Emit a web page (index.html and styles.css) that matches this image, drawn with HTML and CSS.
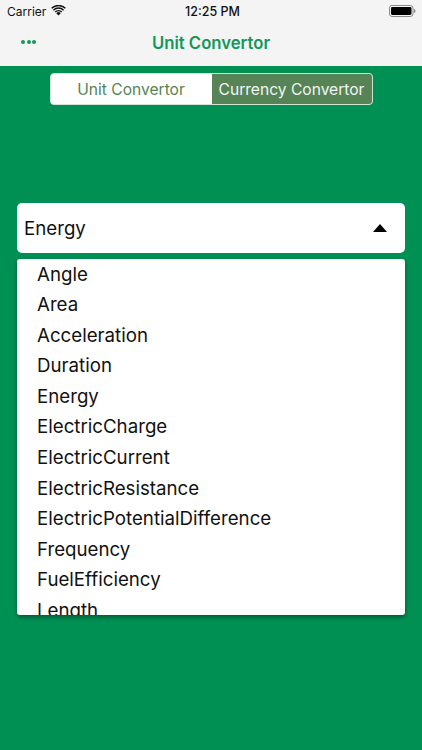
FILE: index.html
```html
<!DOCTYPE html>
<html lang="en">
<head>
<meta charset="utf-8">
<title>Unit Convertor</title>
<link rel="stylesheet" href="styles.css">
</head>
<body>
<div class="app">
  <header class="top">
    <div class="status">
      <div class="status-left">
        <span>Carrier</span>
        <svg class="wifi" viewBox="0 0 16 12" width="15" height="11"><path d="M8 11.5 5.6 8.9a3.4 3.4 0 0 1 4.8 0z" fill="#111"/><path d="M3.9 7.2a5.8 5.8 0 0 1 8.2 0l-1 1.1a4.4 4.4 0 0 0-6.2 0z" fill="#111"/><path d="M1.9 5.1a8.6 8.6 0 0 1 12.2 0l-1.1 1.1a7 7 0 0 0-10 0z" fill="#111"/><path d="M0 3.1a11.3 11.3 0 0 1 16 0l-1.1 1.1a9.8 9.8 0 0 0-13.8 0z" fill="#111"/></svg>
      </div>
      <div class="status-time">12:25 PM</div>
      <div class="status-right">
        <svg class="battery" viewBox="0 0 27 12" width="27" height="12"><rect x=".5" y=".5" width="23.5" height="11" rx="2.6" fill="none" stroke="#888"/><rect x="2" y="2" width="20.5" height="8" rx="1.4" fill="#000"/><path d="M25 4v4c.9-.2 1.5-1 1.5-2s-.6-1.8-1.5-2z" fill="#888"/></svg>
      </div>
    </div>
    <div class="nav">
      <div class="dots"><i></i><i></i><i></i></div>
      <div class="nav-title">Unit Convertor</div>
    </div>
  </header>
  <main class="main">
    <div class="tabs">
      <div class="tab">Unit Convertor</div>
      <div class="tab active">Currency Convertor</div>
    </div>
    <div class="select">
      <span>Energy</span>
      <span class="caret"></span>
    </div>
    <div class="list">
      <div class="item">Angle</div>
      <div class="item">Area</div>
      <div class="item">Acceleration</div>
      <div class="item">Duration</div>
      <div class="item">Energy</div>
      <div class="item">ElectricCharge</div>
      <div class="item">ElectricCurrent</div>
      <div class="item">ElectricResistance</div>
      <div class="item">ElectricPotentialDifference</div>
      <div class="item">Frequency</div>
      <div class="item">FuelEfficiency</div>
      <div class="item">Length</div>
    </div>
  </main>
</div>
</body>
</html>
```
FILE: styles.css
```css
* { box-sizing: border-box; }
html, body { margin: 0; padding: 0; }
body { width: 422px; height: 750px; overflow: hidden; font-family: Inter, "Liberation Sans", sans-serif; background: #009053; }
.app { display: flex; flex-direction: column; height: 750px; }
.top { background: #f4f4f4; height: 66px; flex: none; }
.status { height: 22px; display: grid; grid-template-columns: 1fr auto 1fr; align-items: center; padding: 0 6px 0 7px; font-size: 12px; color: #111; }
.status-left { display: flex; align-items: center; gap: 5px; }
.wifi { margin-top: -2px; }
.status-time { font-weight: 500; font-size: 12.5px; margin-left: 2px; }
.status-right { display: flex; justify-content: flex-end; }
.battery { display: block; }
.nav { height: 44px; display: grid; place-items: center; position: relative; }
.nav-title { color: #13985c; font-size: 16.7px; font-weight: 600; margin-top: -2px; }
.dots { position: absolute; left: 21px; top: 18px; display: flex; gap: 1.5px; }
.dots i { width: 4px; height: 4px; border-radius: 50%; background: #13985c; }
.main { flex: 1; display: flex; flex-direction: column; padding: 7px 17px 0 17px; }
.tabs { align-self: center; width: 323px; height: 32px; display: flex; background: #fff; border: 1px solid #cfe3d6; border-radius: 4px; overflow: hidden; font-size: 15.6px; color: #568457; }
.tab { flex: none; width: 161px; display: flex; align-items: center; justify-content: center; }
.tab.active { flex: 1; background: #568457; color: #f2f6f2; }
.select { margin-top: 98px; height: 50px; background: #fff; border-radius: 5px; display: flex; align-items: center; justify-content: space-between; padding: 0 18px 0 7px; font-size: 18.7px; color: #111; }
.caret { width: 0; height: 0; border-left: 7.5px solid transparent; border-right: 7.5px solid transparent; border-bottom: 8px solid #000; }
.list { margin-top: 5.5px; height: 356.5px; background: #fff; border-radius: 3px; overflow: hidden; padding-left: 20px; box-shadow: 0 2px 4px rgba(0,0,0,.4); font-size: 18.7px; color: #111; }
.item { height: 30.6px; line-height: 32px; white-space: nowrap; }
```
